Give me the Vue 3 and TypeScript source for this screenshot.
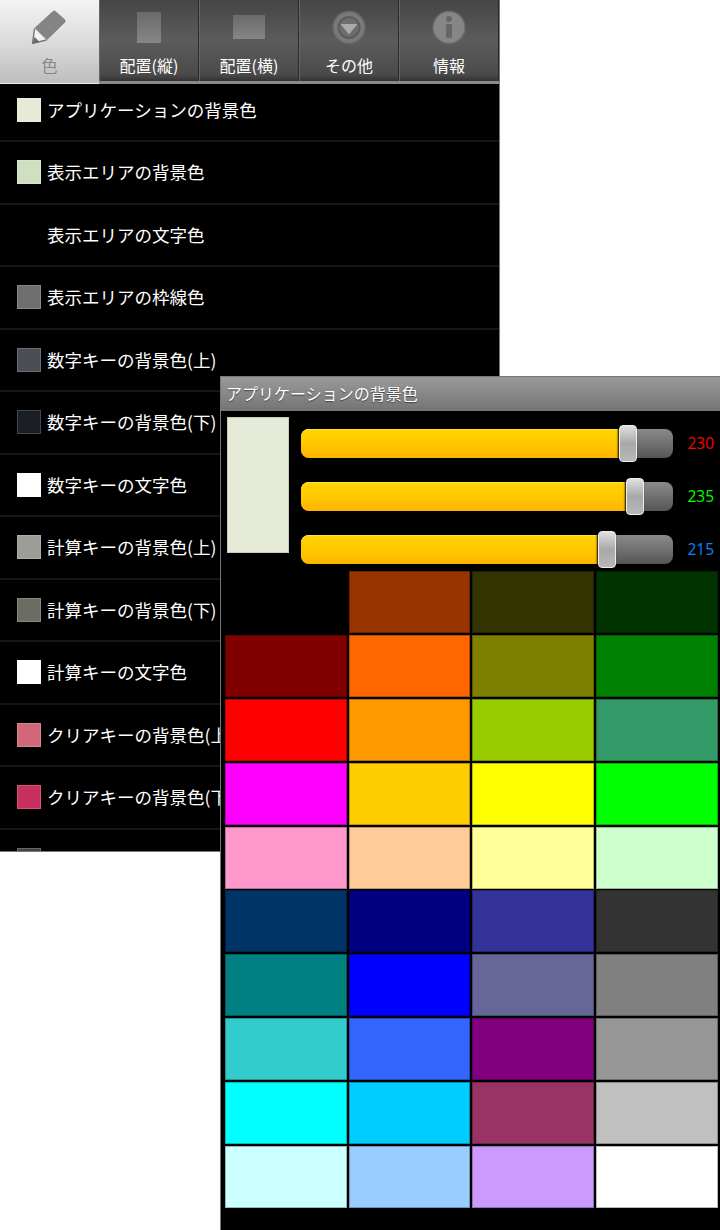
<script setup lang="ts">
interface Row { label: string; color: string | null }
const rows: Row[] = [
  { label: 'アプリケーションの背景色', color: '#e6ebd7' },
  { label: '表示エリアの背景色', color: '#cfe0c0' },
  { label: '表示エリアの文字色', color: null },
  { label: '表示エリアの枠線色', color: '#6e6e6e' },
  { label: '数字キーの背景色(上)', color: '#4a4e55' },
  { label: '数字キーの背景色(下)', color: '#1a1f26' },
  { label: '数字キーの文字色', color: '#ffffff' },
  { label: '計算キーの背景色(上)', color: '#9a9e96' },
  { label: '計算キーの背景色(下)', color: '#6a6e62' },
  { label: '計算キーの文字色', color: '#ffffff' },
  { label: 'クリアキーの背景色(上)', color: '#d0687a' },
  { label: 'クリアキーの背景色(下)', color: '#c83060' },
  { label: '', color: '#444444' },
]
const tabs = ['色', '配置(縦)', '配置(横)', 'その他', '情報']
const sliders = [
  { value: 230, color: '#ff0000' },
  { value: 235, color: '#00ff00' },
  { value: 215, color: '#0a84ff' },
]
const thumbPos = (v: number): string => `${5 + v * 1.4}px`
const palette = [
  '#000000', '#993300', '#333300', '#003300',
  '#800000', '#ff6600', '#808000', '#008000',
  '#ff0000', '#ff9900', '#99cc00', '#339966',
  '#ff00ff', '#ffcc00', '#ffff00', '#00ff00',
  '#ff99cc', '#ffcc99', '#ffff99', '#ccffcc',
  '#003366', '#000080', '#333399', '#333333',
  '#008080', '#0000ff', '#666699', '#808080',
  '#33cccc', '#3366ff', '#800080', '#969696',
  '#00ffff', '#00ccff', '#993366', '#c0c0c0',
  '#ccffff', '#99ccff', '#cc99ff', '#ffffff',
]
</script>

<template>
  <div class="desktop">
    <section class="phone">
      <nav class="tabs">
        <div v-for="(t, i) in tabs" :key="t" class="tab" :class="{ active: i === 0 }">
          <svg class="icon" viewBox="0 0 60 44" width="60" height="44">
            <defs>
              <linearGradient id="g1" x1="0" y1="0" x2="0" y2="1">
                <stop offset="0" stop-color="#6a6a6a" />
                <stop offset="1" stop-color="#868686" />
              </linearGradient>
            </defs>
            <template v-if="i === 0">
              <path d="M33 11 Q34.5 10 36 11.5 L45 19.5 Q46.5 21 45 22.5 L27 40 L14.5 28 Z" fill="#848484" />
              <path d="M15.5 30 L25 39.5 L13.5 42.5 Z" fill="#f2f2f2" />
              <path d="M14.5 28.5 L12.5 43.5 L26.5 40" fill="none" stroke="#777" stroke-width="1.4" stroke-linejoin="round" />
              <path d="M14.5 37 L12.5 43.5 L19.5 41.7 Z" fill="#6a6a6a" />
            </template>
            <rect v-else-if="i === 1" x="18" y="12" width="24" height="31" fill="url(#g1)" />
            <rect v-else-if="i === 2" x="14" y="15" width="32" height="24" fill="url(#g1)" />
            <template v-else-if="i === 3">
              <circle cx="30" cy="27.5" r="16" fill="#7a7a7a" stroke="#686868" stroke-width="1.5" />
              <circle cx="30" cy="27.5" r="10.5" fill="#6e6e6e" stroke="#5c5c5c" stroke-width="2" />
              <path d="M21.5 24 H38.5 L30 34.5 Z" fill="#aaaaaa" />
            </template>
            <template v-else>
              <circle cx="30" cy="27.5" r="16" fill="#868686" stroke="#6c6c6c" stroke-width="1.5" />
              <circle cx="30" cy="19" r="3" fill="#666" />
              <rect x="27" y="24" width="6" height="14" rx="1.5" fill="#666" />
            </template>
          </svg>
          <span class="tab-label">{{ t }}</span>
        </div>
      </nav>
      <ul class="list">
        <li v-for="(r, i) in rows" :key="i" class="row">
          <span class="swatch" :class="{ none: !r.color }" :style="r.color ? { background: r.color } : undefined"></span>
          <span v-if="r.label" class="row-label">{{ r.label }}</span>
        </li>
      </ul>
    </section>

    <section class="dialog">
      <header class="title">アプリケーションの背景色</header>
      <div class="controls">
        <div class="preview"></div>
        <div class="sliders">
          <div v-for="s in sliders" :key="s.value" class="slider">
            <div class="track">
              <div class="fill" :style="{ width: thumbPos(s.value) }"></div>
              <div class="thumb" :style="{ left: thumbPos(s.value) }"></div>
            </div>
            <span class="val" :style="{ color: s.color }">{{ s.value }}</span>
          </div>
        </div>
      </div>
      <div class="palette">
        <div v-for="(c, i) in palette" :key="i" class="cell" :class="{ blank: i === 0 }" :style="{ background: c }"></div>
      </div>
    </section>
  </div>
</template>

<style>
html, body { margin: 0; background: #fff; }
</style>

<style scoped>
.desktop {
  position: relative;
  width: 720px;
  height: 1230px;
  overflow: hidden;
  background: #fff;
  font-family: "Noto Sans CJK JP", "Noto Sans", sans-serif;
}
.phone {
  width: 500px;
  height: 852px;
  box-sizing: border-box;
  background: #000;
  border-right: 1px solid #777;
  border-bottom: 1px solid #777;
  overflow: hidden;
}
.tabs {
  position: relative;
  z-index: 1;
  display: flex;
  height: 84px;
  box-sizing: border-box;
  border-bottom: 3px solid #8a8a8a;
  background: #555;
}
.tab {
  flex: 0 0 100px;
  box-sizing: border-box;
  display: flex;
  flex-direction: column;
  align-items: center;
  background: linear-gradient(#454545, #5c5c5c 50%, #4a4a4a 92%, #333);
  border-right: 1px solid #2a2a2a;
  border-left: 1px solid #666;
  color: #fff;
}
.tab.active {
  flex-basis: 99px;
  background: linear-gradient(#f4f4f4, #dcdcdc 50%, #bdbdbd);
  border: 0;
  margin-bottom: -3px;
  color: #888;
  border-bottom: 1px solid #eee;
}
.icon { display: block; }
.tab-label {
  margin-top: 9px;
  font-size: 16px;
  line-height: 24px;
}
.list {
  list-style: none;
  margin: -4.5px 0 0;
  padding: 0;
}
.row {
  height: 62.5px;
  box-sizing: border-box;
  display: flex;
  align-items: center;
  padding-left: 17px;
  border-bottom: 2px solid #161616;
  white-space: nowrap;
}
.swatch {
  flex: 0 0 24px;
  height: 24px;
  box-sizing: border-box;
  border: 1px solid rgba(255, 255, 255, 0.18);
}
.swatch.none { border: 0; }
.row-label {
  margin-left: 6px;
  font-size: 17.5px;
  line-height: 24px;
  color: #fff;
}
.dialog {
  position: absolute;
  left: 220px;
  top: 376px;
  width: 500px;
  height: 854px;
  box-sizing: border-box;
  background: #000;
  border-left: 1px solid #777;
  border-top: 1px solid #777;
}
.title {
  height: 34px;
  box-sizing: border-box;
  padding-left: 5px;
  background: linear-gradient(#9a9a9a, #747474);
  color: #fff;
  font-size: 16px;
  line-height: 32px;
  text-shadow: 0 1px 1px rgba(0, 0, 0, 0.5);
}
.controls {
  display: flex;
  height: 160px;
  box-sizing: border-box;
  padding: 6px 0 0 6px;
}
.preview {
  width: 62px;
  height: 136px;
  box-sizing: border-box;
  background: #e6ebd7;
  border: 1px solid #c8ccba;
}
.sliders {
  margin-left: 12px;
  padding-top: 12px;
  display: flex;
  flex-direction: column;
  gap: 24.5px;
}
.slider {
  display: flex;
  align-items: center;
  height: 28.5px;
}
.track {
  position: relative;
  width: 372px;
  height: 28.5px;
  border-radius: 8px;
  background: linear-gradient(#8a8a8a, #6e6e6e 55%, #555);
}
.fill {
  height: 100%;
  border-radius: 8px 0 0 8px;
  background: linear-gradient(#ffd500, #ffc800 50%, #ffb400);
  box-shadow: inset 0 1px 0 #ffe23a;
}
.thumb {
  position: absolute;
  top: -4px;
  width: 18px;
  height: 37px;
  margin-left: -9px;
  box-sizing: border-box;
  border-radius: 4px;
  border: 1px solid #eee;
  background: linear-gradient(#e0e0e0, #a8a8a8 50%, #b8b8b8);
  box-shadow: -1px 0 2px #000;
}
.val {
  width: 35px;
  margin-left: 6px;
  text-align: right;
  font-family: "Open Sans", sans-serif;
  font-size: 15.5px;
  line-height: 20px;
}
.palette {
  display: grid;
  grid-template-columns: repeat(4, 121.7px);
  grid-auto-rows: 62px;
  gap: 1.9px 2px;
  padding-left: 4px;
}
.cell {
  box-sizing: border-box;
  border: 1px solid rgba(0, 0, 0, 0.28);
}
.cell.blank { border: 0; }
</style>
